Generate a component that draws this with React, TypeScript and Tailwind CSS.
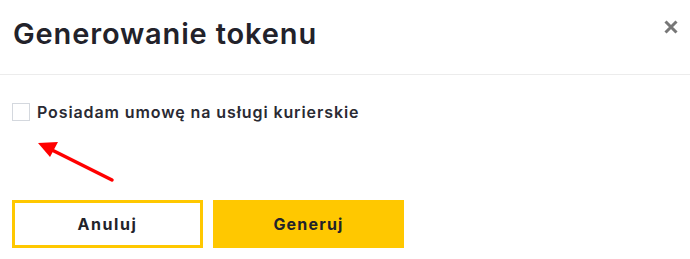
import React from 'react';

const font = { fontFamily: 'Inter, "Open Sans", sans-serif' };

const CloseIcon = () => (
    <svg width="14" height="14" viewBox="0 0 14 14" className="block text-[#777]">
        <path d="M1.5 1.5 L12.5 12.5 M12.5 1.5 L1.5 12.5" stroke="currentColor" strokeWidth="3" strokeLinecap="butt" />
    </svg>
);

const Arrow = () => (
    <svg className="absolute left-0 top-0 pointer-events-none" width="690" height="259" viewBox="0 0 690 259">
        <line x1="112" y1="180" x2="50" y2="149" stroke="#ff0000" strokeWidth="3.5" strokeLinecap="round" />
        <polygon points="38,143 58,142 50,157" fill="#ff0000" />
    </svg>
);

export default function App() {
    return (
        <div className="relative w-[690px] h-[259px] bg-white overflow-hidden" style={font}>
            <div className="flex items-start justify-between h-[75px] pl-[13px] pr-[12px] border-b border-[#ececec]">
                <h2 className="mt-[19px] text-[29px] leading-none font-semibold text-[#22222a] tracking-[0.85px]">Generowanie tokenu</h2>
                <button className="mt-[20px] block"><CloseIcon /></button>
            </div>
            <div className="px-[12px] pt-[28px]">
                <label className="flex items-center gap-[7px] h-[18px]">
                    <span className="w-[18px] h-[18px] border border-[#d4d8de] bg-white block shrink-0" />
                    <span className="text-[16px] font-semibold text-[#2a2a33] tracking-[0.9px]">Posiadam umowę na usługi kurierskie</span>
                </label>
            </div>
            <div className="flex gap-[10px] px-[12px] mt-[79px]">
                <button className="w-[191px] h-[48px] border-[3px] border-[#ffc800] bg-white text-[16px] font-bold text-[#22222a] tracking-[1.6px]">Anuluj</button>
                <button className="w-[191px] h-[48px] bg-[#ffc800] text-[16px] font-bold text-[#22222a] tracking-[1.2px]">Generuj</button>
            </div>
            <Arrow />
        </div>
    );
}
